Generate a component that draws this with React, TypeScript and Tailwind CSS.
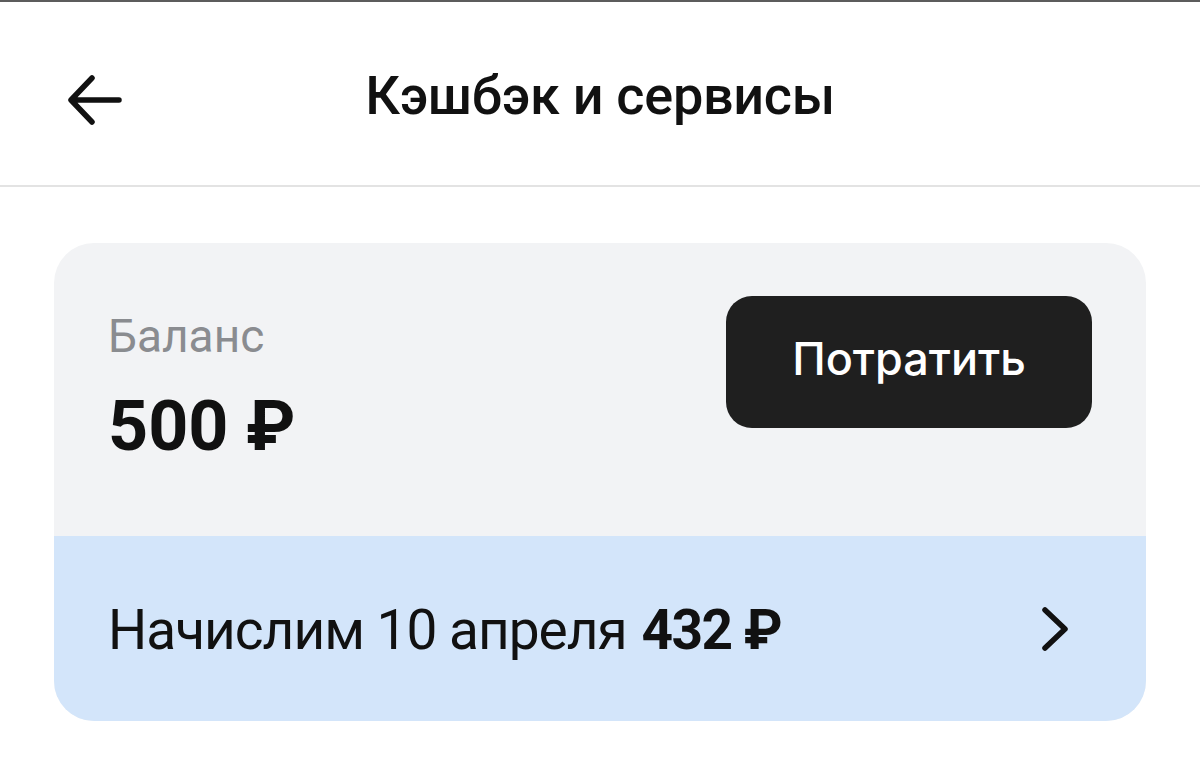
import React from "react";

export default function App() {
  return (
    <div className="w-[1200px] h-[761px] bg-white overflow-hidden" style={{ fontFamily: "Roboto, 'Noto Sans', sans-serif" }}>
      <div className="h-[2px] bg-[#5c5c5c]" />
      <header className="relative h-[183px] flex items-center justify-center">
        <svg className="absolute left-[66px] top-[73px]" width="56" height="50" viewBox="0 0 56 50" fill="none">
          <path d="M53 25H7M26 3L5 25L26 47" stroke="#111" strokeWidth="5.5" strokeLinecap="round" strokeLinejoin="round" />
        </svg>
        <h1 className="text-[54px] font-medium text-[#111] leading-none tracking-[-0.3px] mt-[4px]">Кэшбэк и сервисы</h1>
      </header>
      <div className="h-[2px] bg-[#e3e3e3]" />
      <div className="mx-[54px] mt-[56px] rounded-[40px] overflow-hidden bg-[#f2f3f5]">
        <div className="h-[293px] flex justify-between pl-[56px] pr-[54px] pt-[53px]">
          <div className="flex flex-col pt-[14px]">
            <div className="text-[46px] leading-[52px] text-[#8a8c90] -ml-[2px]">Баланс</div>
            <div className="mt-[29px] text-[70px] leading-[70px] font-bold text-[#111] -ml-[2px]">500 ₽</div>
          </div>
          <button className="w-[366px] h-[132px] rounded-[26px] bg-[#1f1f1f] text-white text-[45px] font-medium" style={{ fontFamily: "Inter, sans-serif" }}>
            <span className="relative -top-[3px]">Потратить</span>
          </button>
        </div>
        <div className="h-[185px] bg-[#d3e5fa] flex items-center justify-between pl-[56px] pr-[76px]">
          <div className="text-[55px] text-[#111] leading-none tracking-[-1px] -ml-[2px] mt-[4px]">
            Начислим 10 апреля <span className="font-bold tracking-[-1.5px] ml-[2px]">432 ₽</span>
          </div>
          <svg width="30" height="46" viewBox="0 0 30 46" fill="none">
            <path d="M5 4L25 23L5 42" stroke="#111" strokeWidth="5.5" strokeLinecap="round" strokeLinejoin="round" />
          </svg>
        </div>
      </div>
    </div>
  );
}
